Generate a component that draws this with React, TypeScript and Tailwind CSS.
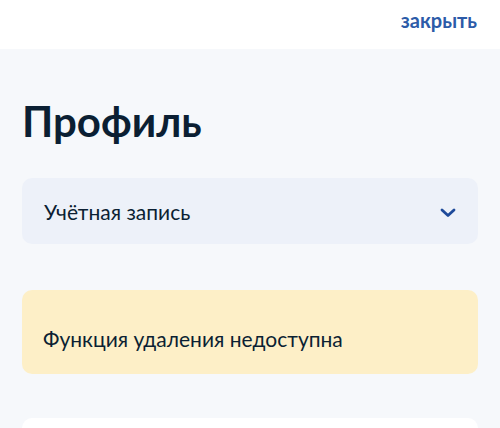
import React from "react";

export default function App() {
  return (
    <div className="w-[500px] h-[428px] overflow-hidden bg-[#f6f8fb] flex flex-col" style={{ fontFamily: "Lato, 'Noto Sans', sans-serif" }}>
      <div className="h-[49px] bg-white flex items-start justify-end pr-[23px] pt-[6px] shrink-0">
        <span className="text-[20px] font-bold text-[#2c5ba8] leading-[28px]">закрыть</span>
      </div>
      <div className="px-[22px] flex flex-col">
        <h1 className="mt-[47px] text-[42px] font-bold text-[#0b1f33] leading-[50px]">Профиль</h1>
        <div className="mt-[32px] h-[66px] rounded-[10px] bg-[#edf1f9] flex items-center justify-between pl-[22px] pr-[21px] pt-[2px]">
          <span className="text-[21px] text-[#0b1f33]">Учётная запись</span>
          <svg width="18" height="11" viewBox="0 0 18 11" fill="none">
            <path d="M3 3l6 5.5 6-5.5" stroke="#1e4a9a" strokeWidth="2.8" strokeLinecap="round" strokeLinejoin="round" />
          </svg>
        </div>
        <div className="mt-[46px] h-[84px] rounded-[10px] bg-[#fdefc7] flex items-center pl-[21px] pt-[14px]">
          <span className="text-[21px] text-[#0b1f33]">Функция удаления недоступна</span>
        </div>
        <div className="mt-[44px] h-[60px] rounded-[10px] bg-white" />
      </div>
    </div>
  );
}
